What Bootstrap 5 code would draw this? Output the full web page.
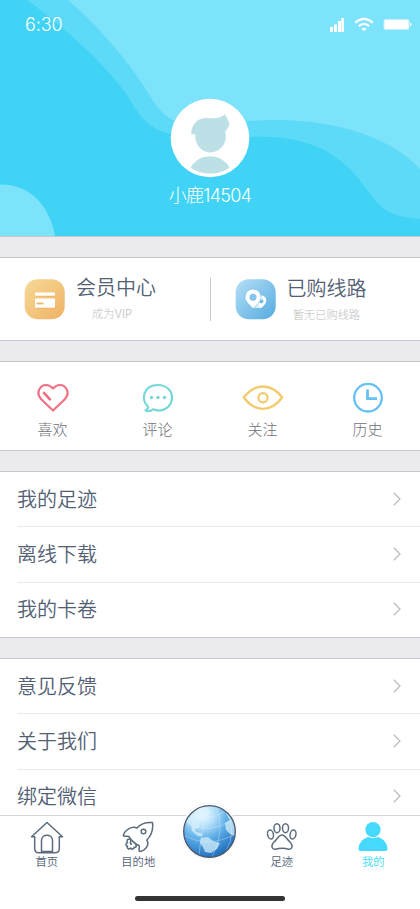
<!DOCTYPE html>
<html lang="zh-CN">
<head>
<meta charset="utf-8">
<meta name="viewport" content="width=device-width, initial-scale=1">
<title>我的</title>
<link href="https://cdn.jsdelivr.net/npm/bootstrap@5.3.0/dist/css/bootstrap.min.css" rel="stylesheet">
<style>
body{font-family:"Noto Sans CJK SC",sans-serif;font-weight:300;color:#526074;background:#fff;line-height:1}
.phone{width:420px;height:909px}
.hero{height:236px;background:#40d3f5}
.hero-bg{left:0;top:0}
.status-row{height:34px}
.latin{font-family:Inter,"Noto Sans CJK SC",sans-serif;font-weight:300}
.clock{font-size:18px;letter-spacing:-.1px;padding:16px 0 0 25px}
.status-icons{padding:17px 8px 0 0}
.avatar{margin-top:64px}
.user-name{font-size:18px;letter-spacing:-.75px;margin-top:9px}
.gap-band{height:22px;background:#ebebef;border-top:1px solid #c8c7cc;border-bottom:1px solid #c8c7cc}
.duo{height:82px}
.duo-half{padding-left:24px}
.duo-rule{width:1px;height:43px;background:#c8c9cc}
.duo-title{font-size:20px;line-height:24px;font-weight:350}
.duo-text{margin-left:11px;padding-bottom:1px}
.duo-sub{font-family:"Noto Sans CJK SC",sans-serif;font-size:11.2px;line-height:16px;color:#bdbdbd;margin-top:6px}
.vip{font-family:Inter,sans-serif}
.quick{height:88px;color:#6f7177;font-size:15px;padding-top:7px}
.quick-label{margin-top:6px;line-height:18px}
.menu-row{height:55px;padding:0 19px 1px 17px;font-size:20px;font-weight:350}
.menu-row:first-child{height:54px}
.menu-row:nth-child(2){height:56px}
.menu-row + .menu-row{background:linear-gradient(#e8e8ea,#e8e8ea) 18px 0/100% 1px no-repeat}
.tabs{height:94px;border-top:1px solid #d5d5d5;padding-left:1px;font-size:11.3px;background:#fff}
.tab-item{width:91.5px;padding-top:5px}
.tab-item.active{color:#45dafd}
.tab-label{line-height:14px;font-weight:350}
.globe{width:52px;margin-top:-14px}
.globe svg{margin-left:-1px}
.home-bar{width:150px;height:5px;background:#333;left:135px;bottom:8px}
</style>
<script src="https://cdn.jsdelivr.net/npm/bootstrap@5.3.0/dist/js/bootstrap.bundle.min.js"></script>
</head>
<body>
<div class="phone position-relative overflow-hidden d-flex flex-column">
  <header class="hero position-relative flex-shrink-0 text-white">
    <svg class="hero-bg position-absolute" width="420" height="236" viewBox="0 0 420 236">
      <path fill="#5ddaf7" d="M27 0C70 31 117 76 132 103C142 121 155 132 175 135C205 138 225 137 250 137C290 135 325 143 352 171C378 200 376 216 420 219V0Z"/>
      <path fill="#7de3fa" d="M68 0C104 31 137 73 150 96C160 113 170 121 184 124C205 127 225 122 250 121C325 115 391 136 420 169V0Z"/>
      <path fill="#7de3fa" d="M0 184.500C32 184 50 208 55 236H0Z"/>
    </svg>
    <div class="position-relative">
      <div class="status-row d-flex justify-content-between align-items-start">
        <div class="clock latin">6:30</div>
        <svg class="status-icons" width="90" height="34" viewBox="0 0 82 17" fill="#fff">
          <path d="M0 10h3v5H0zM4 7.500h3V15H4zM8 4h3v11H8zM11.300 1h2.700v14h-2.700z"/>
          <g fill="none" stroke="#fff" stroke-width="2.100"><path d="M25.200 5.700Q34 -2 42.800 5.700M28.700 9.100Q34 4.500 39.300 9.100"/></g>
          <path d="M31.300 11.600Q34 9.800 36.700 11.600L34 14.200Z"/>
          <rect x="53.500" y="2" width="26" height="11" rx="2" opacity=".5"/><rect x="54.500" y="3" width="24" height="9" rx="1"/><path d="M80 5.500q3 2 0 4z"/>
        </svg>
      </div>
      <div class="d-flex flex-column align-items-center">
        <svg class="avatar" width="80" height="80" viewBox="0 0 80 80">
          <circle cx="40" cy="40" r="39.300" fill="#fff"/>
          <g fill="#bce0e6"><path d="M21 36.300C22 25 28 20 36 20C45 20.500 51 20.500 54.500 16C57 20 60 24 59.200 27.500C58 30 56 32 55.300 34C58 44 51 54.400 40.400 54.400C31 54.400 24.700 46 25.200 36.300Z"/>
          <path d="M20.700 69.500C29 54.500 51 54.500 59.500 69.500C49 77.500 31 77.500 20.700 69.500Z"/></g>
        </svg>
        <div class="user-name latin">小鹿14504</div>
      </div>
    </div>
  </header>
  <div class="gap-band flex-shrink-0"></div>
  <section class="duo d-flex align-items-center flex-shrink-0">
    <div class="duo-half d-flex align-items-center flex-fill w-50">
      <svg width="41" height="41" viewBox="0 0 41 41">
        <defs><linearGradient id="gold" x1="0" y1="0" x2="1" y2="1"><stop stop-color="#f6da98"/><stop offset="1" stop-color="#f0b164"/></linearGradient></defs>
        <rect x=".7" y=".2" width="40" height="40" rx="13" fill="url(#gold)"/>
        <path fill="#e69c46" opacity=".6" d="M12 15h19v2.500H12zM12 22h19v7.500H12z"/>
        <rect x="11" y="13.500" width="20" height="3.200" rx=".7" fill="#fff"/><rect x="11" y="19.500" width="20" height="9.200" rx=".7" fill="#fff"/><path fill="#f1b96f" d="M12.500 23.500h7v1.900h-7z"/>
      </svg>
      <div class="duo-text text-center"><div class="duo-title">会员中心</div><div class="duo-sub pe-2">成为<span class="vip">VIP</span></div></div>
    </div>
    <div class="duo-rule"></div>
    <div class="duo-half d-flex align-items-center flex-fill w-50">
      <svg width="41" height="41" viewBox="0 0 41 41">
        <defs><linearGradient id="sky" x1="0" y1="0" x2="1" y2="1"><stop stop-color="#b5dff6"/><stop offset="1" stop-color="#55abe0"/></linearGradient></defs>
        <rect x=".7" y=".2" width="40" height="40" rx="13" fill="url(#sky)"/>
        <path fill="#d9effa" d="M19 29l4-4 4 4z"/>
        <path fill="#fff" d="M26 29c-3-3-4.500-5-4.500-7.500a4.900 4.900 0 0 1 9.800 0c0 2.500-2 5-5.300 7.500z"/><circle cx="26.300" cy="22.300" r="2.100" fill="#70bae7"/>
        <path fill="#fff" stroke="#79bee8" stroke-width=".7" d="M18.200 29.500C12.500 24.500 10 21.500 10 18a8 8 0 0 1 16 0c0 3.800-2.300 6.700-7.800 11.500z"/><circle cx="18" cy="18.300" r="3.500" fill="#82c4eb"/>
      </svg>
      <div class="duo-text text-center"><div class="duo-title">已购线路</div><div class="duo-sub">暂无已购线路</div></div>
    </div>
  </section>
  <div class="gap-band flex-shrink-0"></div>
  <section class="quick row g-0 text-center flex-shrink-0 align-items-center">
    <div class="col-3"><svg width="42" height="32" viewBox="0 0 42 32" fill="none" stroke="#ee7184" stroke-width="2.200" stroke-linecap="round" stroke-linejoin="round"><path d="M21 28.500L9.200 17.200C3 10.500 8.500 3 14 3C17.500 3 19.300 4.500 21 6.500C22.700 4.500 24.500 3 28 3C33.500 3 39 10.500 32.800 17.200Z"/><path d="M12 11l6 6.300" stroke-width="2.600"/></svg><div class="quick-label">喜欢</div></div>
    <div class="col-3"><svg width="42" height="32" viewBox="0 0 42 32" fill="none" stroke="#75d7d6" stroke-width="2.200" stroke-linejoin="round"><path d="M8.500 28.500C10.500 27.500 11 26.500 11 24.700C3.500 18 6 3 21 3C29 3 35 8.300 35 15.500C35 25.500 25 31 16 27.300C13.500 29.500 11 29.500 8.500 28.500Z"/><g fill="#75d7d6" stroke="none"><circle cx="14.500" cy="15.500" r="1.700"/><circle cx="21" cy="15.500" r="1.700"/><circle cx="27.500" cy="15.500" r="1.700"/></g></svg><div class="quick-label">评论</div></div>
    <div class="col-3"><svg width="42" height="32" viewBox="0 0 42 32" fill="none" stroke="#f4cb6c" stroke-width="2.400" stroke-linejoin="round"><path d="M1.800 15.500C13 .9 29 .9 40.200 15.500C29 30.600 13 30.600 1.800 15.500Z"/><circle cx="21" cy="15.700" r="4.600" stroke-width="2.200"/></svg><div class="quick-label">关注</div></div>
    <div class="col-3"><svg width="42" height="32" viewBox="0 0 42 32" fill="none" stroke="#65c0f5"><circle cx="21" cy="15.700" r="13.800" stroke-width="2.300"/><path d="M20.500 7.500v9.200H30" stroke-width="2.800"/></svg><div class="quick-label">历史</div></div>
  </section>
  <div class="gap-band flex-shrink-0"></div>
  <svg class="d-none"><symbol id="chev" viewBox="0 0 8 14"><path d="M.8.800L7 7 .8 13.200" fill="none" stroke="#bcbcc0" stroke-width="1.300"/></symbol></svg>
  <nav class="flex-shrink-0">
    <div class="menu-row d-flex align-items-center justify-content-between"><span>我的足迹</span><svg width="8" height="14"><use href="#chev"/></svg></div>
    <div class="menu-row d-flex align-items-center justify-content-between"><span>离线下载</span><svg width="8" height="14"><use href="#chev"/></svg></div>
    <div class="menu-row d-flex align-items-center justify-content-between"><span>我的卡卷</span><svg width="8" height="14"><use href="#chev"/></svg></div>
  </nav>
  <div class="gap-band flex-shrink-0"></div>
  <nav class="flex-shrink-0">
    <div class="menu-row d-flex align-items-center justify-content-between"><span>意见反馈</span><svg width="8" height="14"><use href="#chev"/></svg></div>
    <div class="menu-row d-flex align-items-center justify-content-between"><span>关于我们</span><svg width="8" height="14"><use href="#chev"/></svg></div>
    <div class="menu-row d-flex align-items-center justify-content-between"><span>绑定微信</span><svg width="8" height="14"><use href="#chev"/></svg></div>
  </nav>
  <footer class="tabs position-absolute bottom-0 start-0 w-100 d-flex align-items-start">
    <div class="tab-item text-center"><svg class="d-block mx-auto" width="34" height="33" viewBox="0 0 34 33" fill="none" stroke="#5c6c7c" stroke-width="1.500" stroke-linecap="round" stroke-linejoin="round"><path d="M4.700 15.800H1.500L17 1.500L32.500 15.800H29.300V27.500Q29.300 31.800 25 31.800H9Q4.700 31.800 4.700 27.500Z"/><path d="M11.500 30.500V19.500C11.500 12.500 22.500 12.500 22.500 19.500V30.500Z"/></svg><div class="tab-label">首页</div></div>
    <div class="tab-item text-center"><svg class="d-block mx-auto" width="34" height="33" viewBox="0 0 34 33" fill="none" stroke="#5c6c7c" stroke-width="1.500" stroke-linecap="round" stroke-linejoin="round"><path d="M31.500 1.500C25 .9 19.500 3 15.800 7C11 4.500 3.500 9 2.300 14.800C3.500 16 5.500 14.500 7.800 15.500C10 19 13.500 22.500 18 24.500C19.500 26.500 16.500 29 18.800 30.500C24 30 29 24 25.800 19C30 15 32.300 8 31.500 1.500Z"/><circle cx="22.500" cy="10.500" r="2.300"/><path d="M8.500 18.300C5.500 17.500 5.800 21 6.500 21.800C4 22.500 5 25.500 6.500 25C5.500 28 8.500 28.500 9.500 27C11 29 13.500 28 13 26.300C15.500 27 16 24.500 14.500 23.800M9.500 19.500C10.500 22 8 22.500 10.500 23.300"/></svg><div class="tab-label">目的地</div></div>
    <div class="globe flex-shrink-0">
      <svg class="d-block" width="54" height="58" viewBox="0 0 54 58">
        <defs><radialGradient id="sea" cx=".35" cy=".16" r=".85"><stop stop-color="#f4fcff"/><stop offset=".28" stop-color="#b8e2f9"/><stop offset=".6" stop-color="#5aabe6"/><stop offset="1" stop-color="#226fbe"/></radialGradient><clipPath id="disc"><circle cx="26.500" cy="29.500" r="25.500"/></clipPath></defs>
        <circle cx="26.500" cy="29" r="28" fill="#fff" stroke="#eee" stroke-width=".7"/><circle cx="26.500" cy="29.500" r="26" fill="url(#sea)"/>
        <g clip-path="url(#disc)"><g fill="#d8f1fd" opacity=".72"><path d="M3 20C8 11 15 7 24 7L29 11L24 13L22 17L16 21L17 25L12 27L13 30L18 31L20 34L15 34L9 29L8 23Z"/><path d="M18 36L25 35L30 39L37 41L34 47L28 51L22 50L20 45L17 41Z"/><path d="M42 21L48 17L54 24L52 34L47 32L43 28Z"/><path d="M42 9L47 12L50 18L46 17Z"/></g>
        <g fill="none" stroke="#e1f5ff" stroke-width=".6" opacity=".6"><path d="M1 33Q24 47 53 32M2 21Q26 34 51 17M7 11Q25 21 43 9M33 4Q43 28 29 55M25 4Q18 31 16 53M44 10Q54 30 43 49"/></g></g>
        <circle cx="26.500" cy="29.500" r="25.800" fill="none" stroke="#4e596a" stroke-width="1.300"/>
      </svg>
    </div>
    <div class="tab-item text-center"><svg class="d-block mx-auto" width="34" height="33" viewBox="0 0 34 33" fill="none" stroke="#5c6c7c" stroke-width="1.500"><ellipse cx="5.500" cy="13.500" rx="2.900" ry="4.500" transform="rotate(-12 5.500 13.500)"/><ellipse cx="12" cy="7.200" rx="3" ry="4.500"/><ellipse cx="20.500" cy="7.200" rx="3" ry="4.500"/><ellipse cx="28" cy="13.500" rx="2.900" ry="4.500" transform="rotate(12 28 13.500)"/><path stroke-linejoin="round" d="M17 14C20.500 14 22 19 25.500 21.500C28.500 25 27 28.700 23.500 28.300C19 27 15 27 10.500 28.300C7 28.700 5.500 25 8.500 21.500C12 19 13.500 14 17 14Z"/></svg><div class="tab-label">足迹</div></div>
    <div class="tab-item active text-center"><svg class="d-block mx-auto" width="34" height="33" viewBox="0 0 34 33" fill="#45dafd"><circle cx="17" cy="8.700" r="7.600"/><path d="M12 16Q17 18.300 22 16C28 18 31.500 23 31.500 28Q31.500 30 29.500 30H4.500Q2.500 30 2.500 28C2.500 23 6 18 12 16Z"/></svg><div class="tab-label">我的</div></div>
    <div class="home-bar position-absolute rounded-pill"></div>
  </footer>
</div>
</body>
</html>
